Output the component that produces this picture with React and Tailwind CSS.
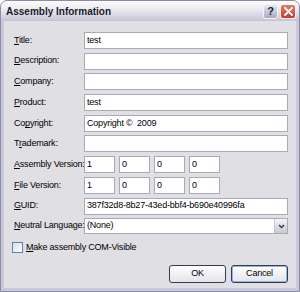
import React from 'react';

const font = { fontFamily: '"Liberation Sans", Arial, sans-serif' };

// Label with one underlined access-key letter
function Label({ pre = '', k, post = '' }) {
  return (
    <span className="whitespace-nowrap">
      {pre}
      <span className="underline underline-offset-[1px] [text-decoration-skip-ink:none]">{k}</span>
      {post}
    </span>
  );
}

function TextBox({ value = '', className = '' }) {
  return (
    <div
      className={`h-[17px] bg-white border border-[#a5acb5] flex items-center px-[2px] text-black overflow-hidden whitespace-pre ${className}`}
    >
      {value}
    </div>
  );
}

function Row({ label, children }) {
  return (
    <div className="flex items-center">
      <div className="w-[70px] shrink-0">{label}</div>
      <div className="flex-1 flex">{children}</div>
    </div>
  );
}

export default function App() {
  const version = ['1', '0', '0', '0'];
  return (
    <div
      style={font}
      className="w-[300px] h-[292px] flex flex-col bg-[#c9c8d8] border border-[#8d8ca8] rounded-t-[7px] overflow-hidden text-[9px] tracking-[-0.2px] text-black"
    >
      {/* Title bar */}
      <div className="h-[20px] shrink-0 flex items-center pl-[5px] pr-[3px] bg-gradient-to-b from-[#fdfdfe] via-[#e6e6ee] to-[#c5c4d6]">
        <span className="flex-1 font-bold text-[10px] tracking-[0px] text-[#1b1b2a]">Assembly Information</span>
        <div className="flex gap-[2px]">
          <div className="w-[15px] h-[15px] rounded-[3px] border border-[#f4f4f8] bg-gradient-to-b from-[#e8e8f0] to-[#a9a9c0] flex items-center justify-center text-[11px] font-bold text-[#1c1c3a] leading-none">
            ?
          </div>
          <div className="w-[16px] h-[15px] rounded-[3px] border border-[#f4f4f8] bg-gradient-to-b from-[#e87a68] to-[#c43c28] flex items-center justify-center">
            <svg width="9" height="9" viewBox="0 0 9 9">
              <path d="M1 1 L8 8 M8 1 L1 8" stroke="#fff" strokeWidth="1.8" strokeLinecap="round" />
            </svg>
          </div>
        </div>
      </div>

      {/* Client area */}
      <div className="flex-1 mx-[3px] mb-[3px] bg-[#e0dfe3] pt-[11px] pl-[10px] pr-[8px] flex flex-col">
        <div className="flex flex-col gap-[3.7px]">
          <Row label={<Label k="T" post="itle:" />}>
            <TextBox value="test" className="flex-1" />
          </Row>
          <Row label={<Label k="D" post="escription:" />}>
            <TextBox className="flex-1" />
          </Row>
          <Row label={<Label k="C" post="ompany:" />}>
            <TextBox className="flex-1" />
          </Row>
          <Row label={<Label k="P" post="roduct:" />}>
            <TextBox value="test" className="flex-1" />
          </Row>
          <Row label={<Label pre="Co" k="p" post="yright:" />}>
            <TextBox value="Copyright ©  2009" className="flex-1" />
          </Row>
          <Row label={<Label pre="T" k="r" post="ademark:" />}>
            <TextBox className="flex-1" />
          </Row>
          <Row label={<Label k="A" post="ssembly Version:" />}>
            <div className="flex gap-[4px]">
              {version.map((v, i) => (
                <TextBox key={i} value={v} className="w-[31px]" />
              ))}
            </div>
          </Row>
          <Row label={<Label k="F" post="ile Version:" />}>
            <div className="flex gap-[4px]">
              {version.map((v, i) => (
                <TextBox key={i} value={v} className="w-[31px]" />
              ))}
            </div>
          </Row>
          <Row label={<Label k="G" post="UID:" />}>
            <TextBox value="387f32d8-8b27-43ed-bbf4-b690e40996fa" className="flex-1" />
          </Row>
          <Row label={<Label k="N" post="eutral Language:" />}>
            <div className="flex-1 h-[16px] bg-white border border-[#a5acb5] flex items-center">
              <span className="flex-1 pl-[2px]">(None)</span>
              <div className="w-[13px] h-[14px] bg-gradient-to-b from-[#f4f4f8] to-[#c6c8d6] border-l border-[#c3c6d4] flex items-center justify-center">
                <svg width="7" height="5" viewBox="0 0 7 5">
                  <path d="M1 1 L3.5 3.5 L6 1" stroke="#3b3b4f" strokeWidth="1.5" fill="none" />
                </svg>
              </div>
            </div>
          </Row>
        </div>

        {/* Checkbox */}
        <div className="flex items-center gap-[3px] mt-[7px] -ml-[2px]">
          <div className="w-[11px] h-[11px] border border-[#5e81b0] bg-gradient-to-br from-[#dcdde4] to-white" />
          <Label k="M" post="ake assembly COM-Visible" />
        </div>

        {/* Buttons */}
        <div className="flex justify-end gap-[5px] mt-[10px]">
          <div className="w-[57px] h-[18px] rounded-[3px] border border-[#383b4e] bg-gradient-to-b from-white to-[#e4e4ea] flex items-center justify-center">
            OK
          </div>
          <div className="w-[57px] h-[18px] rounded-[3px] border border-[#383b4e] bg-gradient-to-b from-white to-[#e4e4ea] shadow-[inset_0_0_0_1px_#8fb5ea] flex items-center justify-center">
            Cancel
          </div>
        </div>
      </div>
    </div>
  );
}
